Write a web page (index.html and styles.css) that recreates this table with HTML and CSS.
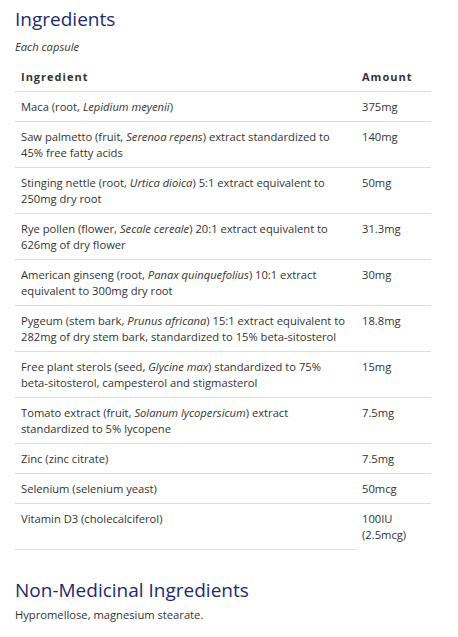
FILE: index.html
```html
<!DOCTYPE html>
<html>
<head>
<meta charset="utf-8">
<link rel="stylesheet" href="styles.css">
</head>
<body>
<main class="page">
  <h2 class="title">Ingredients</h2>
  <p class="note">Each capsule</p>
  <table class="ing-table">
    <thead>
      <tr><th class="c-name">Ingredient</th><th class="c-amt">Amount</th></tr>
    </thead>
    <tbody>
      <tr><td>Maca (root, <em>Lepidium meyenii</em>)</td><td>375mg</td></tr>
      <tr><td>Saw palmetto (fruit, <em>Serenoa repens</em>) extract standardized to 45% free fatty acids</td><td>140mg</td></tr>
      <tr><td>Stinging nettle (root, <em>Urtica dioica</em>) 5:1 extract equivalent to 250mg dry root</td><td>50mg</td></tr>
      <tr><td>Rye pollen (flower, <em>Secale cereale</em>) 20:1 extract equivalent to 626mg of dry flower</td><td>31.3mg</td></tr>
      <tr><td>American ginseng (root, <em>Panax quinquefolius</em>) 10:1 extract equivalent to 300mg dry root</td><td>30mg</td></tr>
      <tr><td>Pygeum (stem bark, <em>Prunus africana</em>) 15:1 extract equivalent to 282mg of dry stem bark, standardized to 15% beta-sitosterol</td><td>18.8mg</td></tr>
      <tr><td>Free plant sterols (seed, <em>Glycine max</em>) standardized to 75% beta-sitosterol, campesterol and stigmasterol</td><td>15mg</td></tr>
      <tr><td>Tomato extract (fruit, <em>Solanum lycopersicum</em>) extract standardized to 5% lycopene</td><td>7.5mg</td></tr>
      <tr><td>Zinc (zinc citrate)</td><td>7.5mg</td></tr>
      <tr><td>Selenium (selenium yeast)</td><td>50mcg</td></tr>
      <tr class="last"><td>Vitamin D3 (cholecalciferol)</td><td>100IU (2.5mcg)</td></tr>
    </tbody>
  </table>
  <h2 class="title title-2">Non-Medicinal Ingredients</h2>
  <p class="plain">Hypromellose, magnesium stearate.</p>
</main>
</body>
</html>
```
FILE: styles.css
```css
html, body {
  margin: 0;
  padding: 0;
  background: #ffffff;
}
body {
  font-family: "Open Sans", "Liberation Sans", sans-serif;
  color: #333333;
  font-size: 11.2px;
  line-height: 16px;
}
.page {
  padding: 6px 15px 0 15px;
}
.title {
  margin: 0;
  font-weight: 400;
  font-size: 19px;
  line-height: 26px;
  color: #1d2b6e;
}
.note {
  margin: 7px 0 7px 0;
  font-style: italic;
}
.ing-table {
  border-collapse: collapse;
  width: 416px;
}
.ing-table th {
  text-align: left;
  font-weight: 700;
  font-size: 11px;
  letter-spacing: 1px;
  padding: 7px 6px 6px 6px;
  border-bottom: 1px solid #dddddd;
}
.ing-table td {
  vertical-align: top;
  padding: 7px 6px 6px 6px;
  border-bottom: 1px solid #dddddd;
}
.ing-table .c-amt {
  width: 63px;
}
.ing-table em {
  font-style: italic;
}
.ing-table tr.last td:last-child {
  border-bottom: none;
}
.title-2 {
  margin-top: 27px;
}
.plain {
  margin: 4px 0 0 0;
}
```
